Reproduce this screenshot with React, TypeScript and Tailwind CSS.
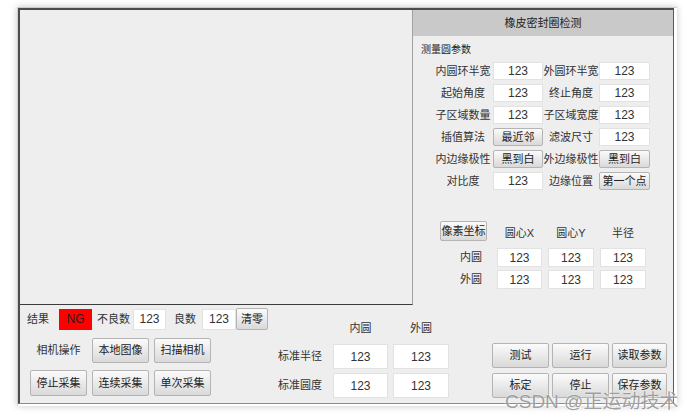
import React from 'react';

const FONT = "font-['Liberation_Sans','Noto_Sans_CJK_SC',sans-serif]";

function Field({ value = '123', className = '' }: { value?: string; className?: string }) {
  return (
    <div
      className={`flex items-center justify-center border border-[#e2e2e2] bg-white text-[12px] text-[#333] ${className}`}
    >
      {value}
    </div>
  );
}

function Btn({ label, className = '' }: { label: string; className?: string }) {
  return (
    <div
      className={`flex items-center justify-center rounded-[2px] border border-[#b4b4b4] bg-gradient-to-b from-[#fbfbfb] to-[#d9d9d9] text-[11px] text-[#222] ${className}`}
    >
      {label}
    </div>
  );
}

type Cell = { text: string; button?: boolean };
const params: [string, Cell, string, Cell][] = [
  ['内圆环半宽', { text: '123' }, '外圆环半宽', { text: '123' }],
  ['起始角度', { text: '123' }, '终止角度', { text: '123' }],
  ['子区域数量', { text: '123' }, '子区域宽度', { text: '123' }],
  ['插值算法', { text: '最近邻', button: true }, '滤波尺寸', { text: '123' }],
  ['内边缘极性', { text: '黑到白', button: true }, '外边缘极性', { text: '黑到白', button: true }],
  ['对比度', { text: '123' }, '边缘位置', { text: '第一个点', button: true }],
];

function ParamCell({ cell }: { cell: Cell }) {
  return cell.button ? <Btn label={cell.text} className="h-[18px]" /> : <Field value={cell.text} className="h-[18px]" />;
}

function ParamPanel() {
  return (
    <div className="flex w-[260px] flex-col">
      <div className="flex h-[26px] items-center justify-center bg-[#c9c9c9] text-[11px] text-[#222]">
        橡皮密封圈检测
      </div>
      <div className="mt-[7px] pl-[8px] text-[10px] leading-[14px] text-[#222]">测量圆参数</div>
      <div className="ml-[20px] mt-[5px] grid grid-cols-[60px_50px_56px_51px] gap-y-[4px]">
        {params.map(([l1, c1, l2, c2]) => (
          <React.Fragment key={l1}>
            <div className="flex h-[18px] items-center justify-center whitespace-nowrap text-[11px] text-[#333]">{l1}</div>
            <ParamCell cell={c1} />
            <div className="flex h-[18px] items-center justify-center whitespace-nowrap text-[11px] text-[#333]">{l2}</div>
            <ParamCell cell={c2} />
          </React.Fragment>
        ))}
      </div>

      <div className="mt-[31px] grid grid-cols-[78px_45px_46px_46px] gap-x-[6px] gap-y-[3px]">
        <div className="flex h-[20px] items-center">
          <Btn label="像素坐标" className="ml-[27px] h-[20px] w-[47px]" />
        </div>
        {['圆心X', '圆心Y', '半径'].map((h) => (
          <div key={h} className="flex items-end justify-center text-[11px] text-[#333]">
            {h}
          </div>
        ))}
        {['内圆', '外圆'].map((row, i) => (
          <React.Fragment key={row}>
            <div className={`flex h-[19px] items-center justify-end pr-[9px] text-[11px] text-[#333] ${i === 0 ? 'mt-[4px]' : ''}`}>
              {row}
            </div>
            {[0, 1, 2].map((k) => (
              <Field key={k} className={`h-[19px] ${i === 0 ? 'mt-[4px]' : ''}`} />
            ))}
          </React.Fragment>
        ))}
      </div>
    </div>
  );
}

function BottomBar() {
  return (
    <div className="flex h-[98px]">
      {/* result counters + camera controls */}
      <div className="w-[255px] pt-[3px]">
        <div className="flex h-[22px] items-center pl-[7px] text-[11px] text-[#333]">
          <span>结果</span>
          <div className="ml-[10px] flex h-[21px] w-[33px] items-center justify-center bg-[#ff0000] text-[12px] text-[#222]">
            NG
          </div>
          <span className="ml-[5px]">不良数</span>
          <Field className="ml-[3px] h-[21px] w-[33px]" />
          <span className="ml-[8px]">良数</span>
          <Field className="ml-[6px] h-[21px] w-[34px]" />
          <Btn label="清零" className="h-[22px] w-[32px]" />
        </div>
        <div className="mt-[8px] grid grid-cols-[57px_57px_57px] gap-x-[5px] gap-y-[7px] pl-[10px]">
          <div className="flex h-[25px] items-center justify-center text-[11px] text-[#333]">相机操作</div>
          <Btn label="本地图像" className="h-[25px]" />
          <Btn label="扫描相机" className="h-[25px]" />
          <Btn label="停止采集" className="h-[26px]" />
          <Btn label="连续采集" className="h-[26px]" />
          <Btn label="单次采集" className="h-[26px]" />
        </div>
      </div>

      {/* reference radius / roundness */}
      <div className="w-[180px] pt-[16px]">
        <div className="grid grid-cols-[53px_55px_56px] gap-x-[5px] gap-y-[4px]">
          <div />
          <div className="mb-[5px] flex h-[14px] items-center justify-center text-[11px] text-[#333]">内圆</div>
          <div className="mb-[5px] flex h-[14px] items-center justify-center text-[11px] text-[#333]">外圆</div>
          {['标准半径', '标准圆度'].map((l) => (
            <React.Fragment key={l}>
              <div className="flex h-[25px] items-center pl-[3px] text-[11px] text-[#333]">{l}</div>
              <Field className="h-[25px]" />
              <Field className="h-[25px]" />
            </React.Fragment>
          ))}
        </div>
      </div>

      {/* run controls */}
      <div className="w-[218px] pl-[37px] pt-[38px]">
        <div className="grid grid-cols-[57px_57px_55px] gap-x-[3px] gap-y-[5px]">
          {['测试', '运行', '读取参数', '标定', '停止', '保存参数'].map((b) => (
            <Btn key={b} label={b} className="h-[25px]" />
          ))}
        </div>
      </div>
    </div>
  );
}

export default function App() {
  return (
    <div className={`h-[419px] w-[693px] overflow-hidden bg-white pl-[17px] pt-[7px] ${FONT}`}>
      <div className="relative w-[660px] border-l border-t border-l-[#ecd486] border-t-[#d9cf9c] bg-white pb-[2px] pr-[3px] shadow-[0_0_7px_rgba(0,0,0,0.22)]">
        <div className="border-b border-l-2 border-r border-t-2 border-b-[#8c8c8c] border-l-[#4c4c4c] border-r-[#5a5a5a] border-t-[#4c4c4c] bg-[#eeeeee]">
          <div className="flex h-[295px]">
            <div className="h-[295px] w-[393px] border-b border-r border-b-[#3c3c3c] border-r-[#a2a2a2] bg-[#eeeeee]" />
            <ParamPanel />
          </div>
          <BottomBar />
        </div>
        <div className="pointer-events-none absolute left-[487px] top-[383px] whitespace-nowrap text-[19px] leading-[22px] text-[rgba(120,120,120,0.7)] [text-shadow:0_0_2px_#fff]">
          CSDN @正运动技术
        </div>
      </div>
    </div>
  );
}
